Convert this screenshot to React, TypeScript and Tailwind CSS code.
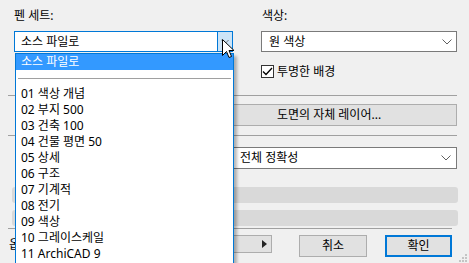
import React from 'react';

const penSets = [
  '01 색상 개념',
  '02 부지 500',
  '03 건축 100',
  '04 건물 평면 50',
  '05 상세',
  '06 구조',
  '07 기계적',
  '08 전기',
  '09 색상',
  '10 그레이스케일',
  '11 ArchiCAD 9',
];

const Chevron: React.FC<{ className?: string }> = ({ className }) => (
  <svg className={className} width="10" height="6" viewBox="0 0 10 6" fill="none">
    <path d="M0.5 0.5 L5 5 L9.5 0.5" stroke="#606060" strokeWidth="1" />
  </svg>
);

const Cursor: React.FC = () => (
  <svg className="absolute left-[222px] top-[39px]" width="13" height="20" viewBox="0 0 13 20">
    <path
      d="M0.5 0.5 L0.5 16.5 L4.5 12.5 L7 18.5 L9.5 17.5 L7 11.5 L12 11.5 Z"
      fill="#fff"
      stroke="#000"
      strokeWidth="1"
      strokeLinejoin="miter"
    />
  </svg>
);

const Grip: React.FC = () => (
  <svg className="absolute right-[2px] bottom-[1px]" width="10" height="10" viewBox="0 0 10 10">
    {[
      [8, 0],
      [5, 3],
      [8, 3],
      [2, 6],
      [5, 6],
      [8, 6],
    ].map(([x, y], i) => (
      <rect key={i} x={x} y={y + 2} width="2" height="2" fill="#c4c4c4" />
    ))}
  </svg>
);

const PenSetDropdown: React.FC = () => (
  <div className="absolute left-0 top-[21px] w-[219px] h-[212px] bg-white border border-[#0078d7] shadow-[3px_3px_3px_rgba(0,0,0,0.28)]">
    <div className="h-[16px] bg-[#3399ff] text-white pl-[5px] flex items-center leading-none">소스 파일로</div>
    <div className="h-[8px]" />
    <div className="mx-[2px] h-px bg-[#a0a0a0]" />
    <div className="h-[7px]" />
    {penSets.map((s) => (
      <div key={s} className="h-[16px] pl-[5px] flex items-center leading-none text-black">
        {s}
      </div>
    ))}
  </div>
);

export default function App() {
  return (
    <div className="relative w-[469px] h-[263px] overflow-hidden bg-[#f0f0f0] text-[12px] text-black font-['Noto_Sans','Noto_Sans_CJK_KR',sans-serif]">
      {/* top: pen set + colour */}
      <div className="flex pl-[14px] gap-[28px]">
        <div className="w-[219px] flex flex-col">
          <div className="h-[31px] flex items-center leading-none">펜 세트:</div>
          <div className="relative h-[21px] flex border border-[#0078d7] bg-white">
            <div className="flex-1 flex items-center pl-[6px] leading-none">소스 파일로</div>
            <div className="w-[16px] -my-px -mr-px border border-[#0078d7] bg-[#cce4f7] flex items-center justify-center">
              <Chevron className="w-[8px]" />
            </div>
            <PenSetDropdown />
          </div>
        </div>
        <div className="w-[196px] flex flex-col">
          <div className="h-[31px] flex items-center leading-none pl-px">색상:</div>
          <div className="h-[21px] flex items-center justify-between border border-[#7a7a7a] bg-white pl-[7px] pr-[4px] leading-none">
            <span>원 색상</span>
            <Chevron />
          </div>
          <div className="mt-[13px] flex items-center gap-[3px] h-[13px] leading-none">
            <span className="w-[13px] h-[13px] border border-[#333] bg-white flex items-center justify-center">
              <svg width="11" height="9" viewBox="0 0 11 9" fill="none">
                <path d="M1 4.5 L4 7.5 L10 1" stroke="#000" strokeWidth="1.3" />
              </svg>
            </span>
            <span>투명한 배경</span>
          </div>
        </div>
      </div>

      {/* lower section, mostly hidden behind the open list */}
      <div className="pl-[8px] pr-[12px] mt-[17px]">
        <div className="h-px bg-[#a0a0a0]" />
        <div className="mt-[8px] h-[22px] flex items-center">
          <div className="w-[193px]" />
          <button className="flex-1 h-[22px] bg-[#e1e1e1] border border-[#adadad] leading-none">
            도면의 자체 레이어...
          </button>
        </div>
        <div className="mt-[9px] h-px bg-[#a0a0a0]" />
        <div className="mt-[11px] h-[22px] flex items-center">
          <div className="w-[225px]" />
          <div className="flex-1 h-[22px] flex items-center justify-between border border-[#7a7a7a] bg-white pl-[6px] pr-[5px] leading-none">
            <span>전체 정확성</span>
            <Chevron />
          </div>
        </div>
        <div className="mt-[18px] ml-[4px] -mr-px h-[16px] rounded-[3px] bg-[#d9d9d9]" />
        <div className="mt-[7px] ml-[4px] -mr-px h-[16px] rounded-[3px] bg-[#d9d9d9]" />
        <div className="mt-[2px] mr-[5px] h-px bg-[#a0a0a0]" />
        <div className="mt-[6px] flex items-start pr-[5px]">
          <span className="w-[122px] pl-[1px] h-[20px] flex items-center leading-none">옵</span>
          <button className="w-[142px] h-[18px] bg-[#e1e1e1] border border-[#adadad] flex items-center justify-end pr-[4px]">
            <svg width="5" height="8" viewBox="0 0 5 8">
              <path d="M0 0 L5 4 L0 8 Z" fill="#222" />
            </svg>
          </button>
          <button className="ml-[27px] w-[68px] h-[22px] bg-[#e1e1e1] border border-[#adadad] leading-none">취소</button>
          <button className="ml-[18px] w-[67px] h-[22px] bg-[#e1e1e1] border-2 border-[#0078d7] leading-none">확인</button>
        </div>
      </div>

      <Cursor />
      <Grip />
    </div>
  );
}
